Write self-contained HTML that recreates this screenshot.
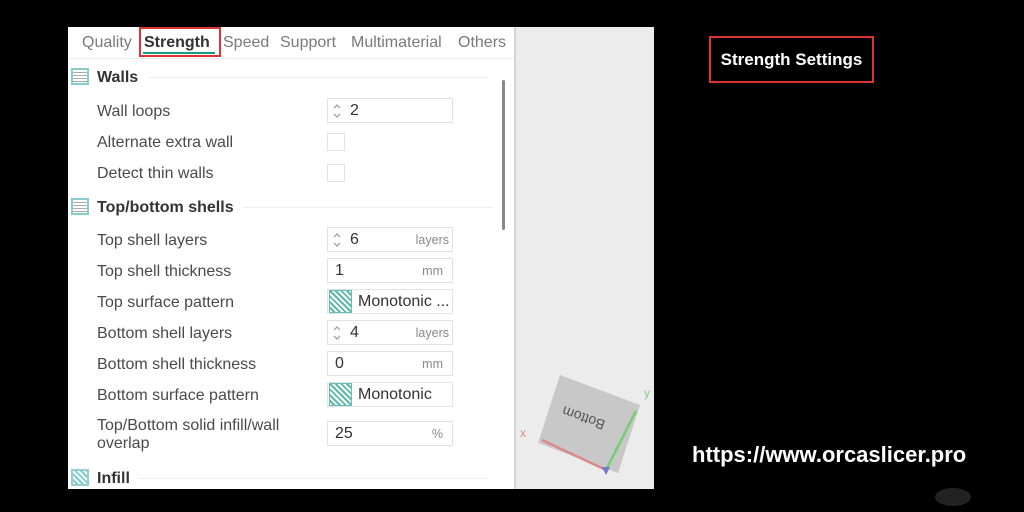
<!DOCTYPE html>
<html><head><style>
body{margin:0;width:1024px;height:512px;background:#000;position:relative;overflow:hidden;font-family:"Liberation Sans",sans-serif}
.a{position:absolute}
#panel{left:68px;top:27px;width:446px;height:462px;background:#fff}
#view{left:514px;top:27px;width:140px;height:462px;background:#ececec;border-left:2px solid #d4d4d4;box-sizing:border-box}
.t{position:absolute;top:7px;font-size:16px;color:#7a7a7a}
.lbl{position:absolute;left:29px;font-size:16px;color:#4a4a4a;margin-top:2px}
.hd{position:absolute;left:29px;font-size:16px;font-weight:bold;color:#333;margin-top:1px}
.ico{position:absolute;left:3px;width:18px;height:17px;border:2px solid #8cc;box-sizing:border-box;background:repeating-linear-gradient(180deg,#fff 0 2px,#aaa 2px 3px)}
.inp{position:absolute;left:259px;width:126px;height:25px;border:1px solid #e2e2e2;box-sizing:border-box;font-size:16px;color:#333}
.inp .v{position:absolute;left:22px;top:3px}
.inp .u{position:absolute;right:3px;top:5px;font-size:12.5px;color:#888}
.sp{position:absolute;left:3px;top:2px;width:12px;height:20px}
.cb{position:absolute;left:259px;width:16px;height:16px;border:1px solid #e2e2e2}
.hat{position:absolute;left:1px;top:0;width:23px;height:23px;border:1px solid #6bb;box-sizing:border-box;background:repeating-linear-gradient(45deg,#fff 0 2px,#5cb8a8 2px 4px)}
.line{position:absolute;height:1px;background:#eee}
</style></head><body>
<div id="panel" class="a">
 <div class="t" style="left:14px">Quality</div>
 <div class="t" style="left:76px;font-weight:bold;color:#333">Strength</div>
 <div class="a" style="left:71px;top:0;width:82px;height:30px;border:2px solid #d33;box-sizing:border-box"></div>
 <div class="a" style="left:75px;top:25px;width:72px;height:2px;background:#1a9a86"></div>
 <div class="t" style="left:155px">Speed</div>
 <div class="t" style="left:212px">Support</div>
 <div class="t" style="left:283px">Multimaterial</div>
 <div class="t" style="left:390px">Others</div>
 <div class="line" style="left:0;top:31px;width:446px"></div>
 <div class="a" style="left:434px;top:53px;width:3px;height:150px;background:#888;border-radius:2px"></div>

 <div class="ico" style="top:41px"></div><div class="hd" style="top:41px">Walls</div><div class="line" style="left:80px;top:50px;width:340px"></div>
 <div class="lbl" style="top:74px">Wall loops</div>
 <div class="inp" style="top:71px"><svg class="sp" viewBox="0 0 12 20"><path d="M3 7 L6 4 L9 7 M3 13 L6 16 L9 13" fill="none" stroke="#999" stroke-width="1.2"/></svg><span class="v">2</span></div>
 <div class="lbl" style="top:105px">Alternate extra wall</div><div class="cb" style="top:106px"></div>
 <div class="lbl" style="top:136px">Detect thin walls</div><div class="cb" style="top:137px"></div>

 <div class="ico" style="top:171px"></div><div class="hd" style="top:171px">Top/bottom shells</div><div class="line" style="left:175px;top:180px;width:250px"></div>
 <div class="lbl" style="top:203px">Top shell layers</div>
 <div class="inp" style="top:200px"><svg class="sp" viewBox="0 0 12 20"><path d="M3 7 L6 4 L9 7 M3 13 L6 16 L9 13" fill="none" stroke="#999" stroke-width="1.2"/></svg><span class="v">6</span><span class="u">layers</span></div>
 <div class="lbl" style="top:234px">Top shell thickness</div>
 <div class="inp" style="top:231px"><span class="v" style="left:7px">1</span><span class="u" style="right:9px">mm</span></div>
 <div class="lbl" style="top:265px">Top surface pattern</div>
 <div class="inp" style="top:262px"><div class="hat"></div><span class="v" style="left:30px">Monotonic ...</span></div>
 <div class="lbl" style="top:296px">Bottom shell layers</div>
 <div class="inp" style="top:293px"><svg class="sp" viewBox="0 0 12 20"><path d="M3 7 L6 4 L9 7 M3 13 L6 16 L9 13" fill="none" stroke="#999" stroke-width="1.2"/></svg><span class="v">4</span><span class="u">layers</span></div>
 <div class="lbl" style="top:327px">Bottom shell thickness</div>
 <div class="inp" style="top:324px"><span class="v" style="left:7px">0</span><span class="u" style="right:9px">mm</span></div>
 <div class="lbl" style="top:358px">Bottom surface pattern</div>
 <div class="inp" style="top:355px"><div class="hat"></div><span class="v" style="left:30px">Monotonic</span></div>
 <div class="lbl" style="top:388px;line-height:18px">Top/Bottom solid infill/wall<br>overlap</div>
 <div class="inp" style="top:394px"><span class="v" style="left:7px">25</span><span class="u" style="right:9px">%</span></div>
 <div class="ico" style="top:442px;background:repeating-linear-gradient(45deg,#fff 0 2px,#7cc 2px 4px);border-color:#9cc"></div><div class="hd" style="top:442px">Infill</div><div class="line" style="left:70px;top:451px;width:350px"></div>
</div>
<div id="view" class="a">
 <svg width="138" height="462" style="position:absolute;left:0;top:0">
  <polygon points="44,348 124,378 102,446 22,416" fill="#c8c8c8"/>
  <text x="0" y="0" font-size="14" fill="#555" transform="translate(90,394) rotate(200)" font-family="Liberation Sans">Bottom</text>
  <line x1="90" y1="443" x2="26" y2="413" stroke="#d88" stroke-width="2.5"/>
  <line x1="90" y1="443" x2="120" y2="384" stroke="#7c7" stroke-width="2.5"/>
  <text x="4" y="410" font-size="12" fill="#d88">x</text>
  <text x="128" y="370" font-size="12" fill="#8c8">y</text>
  <polygon points="86,440 94,440 90,448" fill="#77c"/>
 </svg>
</div>
<div class="a" style="left:709px;top:36px;width:165px;height:47px;border:2px solid #d33;box-sizing:border-box;color:#fff;font-weight:bold;font-size:17px;text-align:center;line-height:44px">Strength Settings</div>
<div class="a" style="left:692px;top:442px;color:#fff;font-weight:bold;font-size:22px">https://www.orcaslicer.pro</div>
<div class="a" style="left:935px;top:488px;width:36px;height:18px;background:#222;border-radius:50%"></div>
</body></html>
